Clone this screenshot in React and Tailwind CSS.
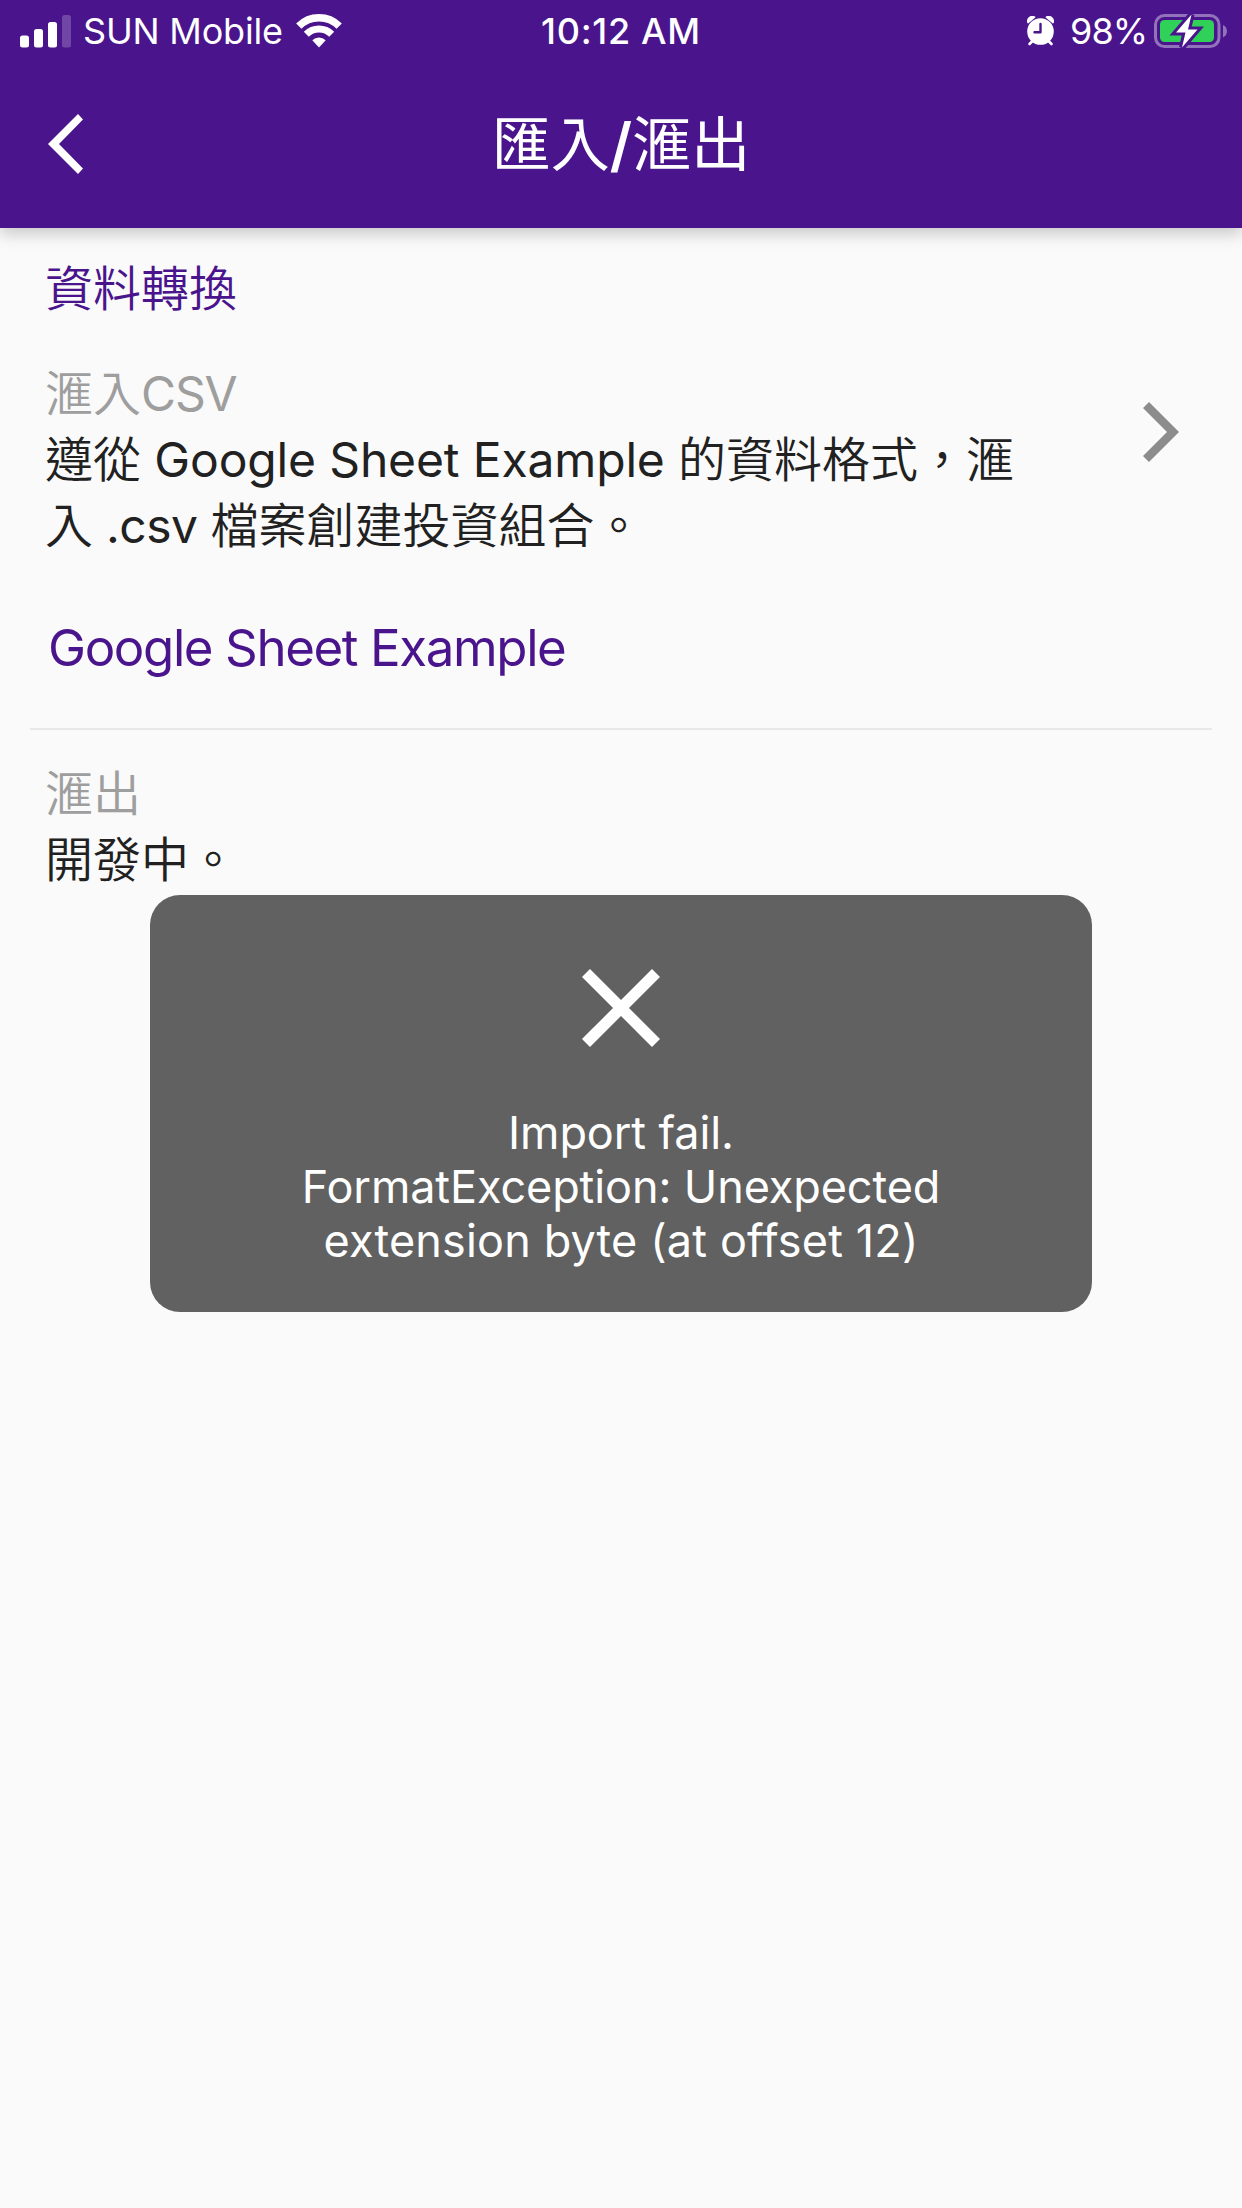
import clsx from 'clsx';

function SignalIcon() {
    return (
        <svg width="52" height="33" viewBox="0 0 52 33" fill="#fff">
            <rect x="0" y="20.5" width="9" height="12" rx="2.5" />
            <rect x="14" y="14" width="9" height="18.5" rx="2.5" />
            <rect x="28" y="7" width="9" height="25.5" rx="2.5" />
            <rect x="42" y="0" width="9" height="32.5" rx="2.5" opacity="0.22" />
        </svg>
    );
}

function WifiIcon() {
    return (
        <svg width="46" height="34" viewBox="0 0 46 34" fill="none" stroke="#fff">
            <path d="M2.8 12.2a28.5 28.5 0 0 1 40.4 0" strokeWidth="7.5" />
            <path d="M10.3 20.2a18 18 0 0 1 25.4 0" strokeWidth="7" />
            <path d="M16.3 26.3a9.6 9.6 0 0 1 13.4 0L23 33.4Z" fill="#fff" stroke="none" />
        </svg>
    );
}

function AlarmIcon() {
    return (
        <svg width="28" height="30" viewBox="0 0 28 30">
            <circle cx="13.5" cy="15.5" r="13.3" fill="#fff" />
            <path d="M1 6.6A4.6 4.6 0 0 1 7.6 1.2ZM26 6.6A4.6 4.6 0 0 0 19.4 1.2Z" fill="#fff" stroke="#fff" strokeWidth="1.6" strokeLinejoin="round" />
            <path d="M5.5 25 2.5 28M21.5 25l3 3" stroke="#fff" strokeWidth="2.6" strokeLinecap="round" />
            <path d="M13.5 8v8.2H7.5" fill="none" stroke="#4a148c" strokeWidth="2.4" strokeLinecap="round" strokeLinejoin="round" />
        </svg>
    );
}

function BatteryIcon() {
    return (
        <svg width="74" height="36" viewBox="0 0 74 36">
            <rect x="1.5" y="2.5" width="63.5" height="31" rx="9" fill="none" stroke="#9272ba" strokeWidth="3" />
            <path d="M69 12v12.5c2.6-1.2 4-3.6 4-6.2s-1.4-5.1-4-6.3Z" fill="#9272ba" />
            <rect x="6" y="7" width="54" height="22" rx="4.5" fill="#30d158" />
            <path d="M37.5 1.5 22 19.5h9.5L28 34.5 43.5 16.5H34Z" fill="#fff" stroke="#4a148c" strokeWidth="6" />
            <path d="M37.5 1.5 22 19.5h9.5L28 34.5 43.5 16.5H34Z" fill="#fff" />
        </svg>
    );
}

function StatusBar() {
    return (
        <div className="grid h-[60px] grid-cols-3 items-center pt-0.5 text-[36px] leading-none whitespace-nowrap">
            <div className="flex items-center pl-5">
                <SignalIcon />
                <span className="ml-[11px] tracking-[-0.2px]">SUN Mobile</span>
                <span className="ml-[13px]"><WifiIcon /></span>
            </div>
            <div className="text-center font-[550] tracking-[0.7px]">10:12 AM</div>
            <div className="flex w-[215px] items-center justify-self-end">
                <AlarmIcon />
                <span className="ml-[15px] w-[84px] tracking-[-0.9px]">98%</span>
                <BatteryIcon />
            </div>
        </div>
    );
}

function Header() {
    return (
        <header className="relative h-[228px] bg-[#4a148c] text-white shadow-[0_6px_15px_rgba(0,0,0,0.2)]">
            <StatusBar />
            <div className="grid h-[168px] grid-cols-[200px_1fr_200px] items-center">
                <svg className="ml-12" width="35" height="60" viewBox="0 0 35 60" fill="#fff">
                    <path d="M30 0 35 5.5 11 30 35 54.5 30 60 0 30Z" />
                </svg>
                <h1 className="text-center text-[59px] leading-none font-normal">匯入<span className="font-semibold">/</span>滙出</h1>
            </div>
        </header>
    );
}

function Item({ title, children, className }) {
    return (
        <div className={clsx('px-[45px] text-[48px] leading-[66px] font-[350] whitespace-nowrap text-[#212121]', className)}>
            <div className="text-[#9e9e9e]">{title}</div>
            {children}
        </div>
    );
}

function Toast() {
    return (
        <div className="absolute top-[895px] left-[150px] flex h-[417px] w-[942px] flex-col items-center rounded-[30px] bg-[#616161] pt-[73px] text-white">
            <svg width="80" height="80" viewBox="0 0 80 80" fill="none" stroke="#fff" strokeWidth="11.3">
                <path d="M5 5 75 75M75 5 5 75" />
            </svg>
            <p className="mt-[58px] text-center text-[45px] leading-[54px] tracking-[-0.1px] whitespace-nowrap">
                Import fail.<br />
                FormatException: Unexpected<br />
                <span className="tracking-[0.15px]">extension byte (at offset 12)</span>
            </p>
        </div>
    );
}

export default function App() {
    return (
        <div lang="zh-Hant" className="relative h-[2208px] w-[1242px] overflow-hidden bg-[#fafafa] font-['Inter','Noto_Sans_CJK_TC',sans-serif]">
            <Header />
            <main>
                <h2 className="px-[45px] pt-7 text-[48px] leading-[66px] font-[350] text-[#4a148c]">資料轉換</h2>
                <div className="mt-[39px] flex items-start">
                    <Item title={<>滙入<span className="font-normal tracking-[-1.2px]">CSV</span></>} className="flex-1">
                        <p>
                            遵從<span className="font-normal tracking-[-0.15px]"> Google Sheet Example </span>的資料格式，滙<br />
                            入<span className="font-normal tracking-[-0.5px]"> .csv </span>檔案創建投資組合。
                        </p>
                    </Item>
                    <svg className="mt-[41px] mr-[63px]" width="36" height="60" viewBox="0 0 36 60" fill="#8c8c8c">
                        <path d="M6 0 0 6 24 30 0 54 6 60 36 30Z" />
                    </svg>
                </div>
                <a className="mt-14 block px-12 text-[51px] leading-[66px] tracking-[-1.4px] text-[#4a148c]">Google Sheet Example</a>
                <hr className="mx-[30px] mt-[47px] border-t-2 border-[#e8e8e8]" />
                <Item title="滙出" className="mt-[31px]">
                    <p>開發中。</p>
                </Item>
            </main>
            <Toast />
        </div>
    );
}
